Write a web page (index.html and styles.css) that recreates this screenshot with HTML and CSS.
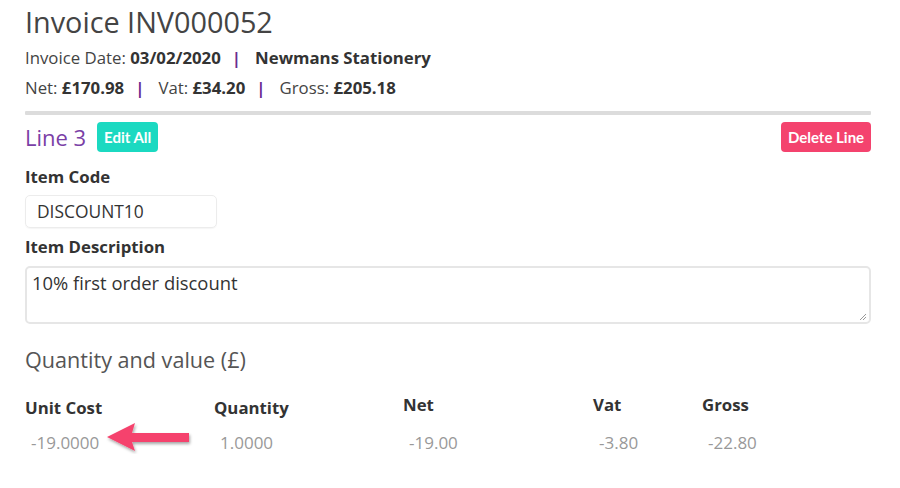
FILE: index.html
```html
<!DOCTYPE html>
<html>
<head>
<meta charset="utf-8">
<link rel="stylesheet" href="styles.css">
</head>
<body>
<div class="page">
  <h1 class="title">Invoice INV000052</h1>
  <div class="meta first">Invoice Date: <b>03/02/2020</b><span class="sep">|</span><b>Newmans Stationery</b></div>
  <div class="meta">Net: <b>£170.98</b><span class="sep">|</span>Vat: <b>£34.20</b><span class="sep">|</span>Gross: <b>£205.18</b></div>
  <div class="rule"></div>
  <div class="line-head">
    <span class="line-title">Line 3</span>
    <button class="btn btn-edit">Edit All</button>
    <span class="spacer"></span>
    <button class="btn btn-delete">Delete Line</button>
  </div>
  <label class="lbl lbl-code">Item Code</label>
  <div class="input code">DISCOUNT10</div>
  <label class="lbl lbl-desc">Item Description</label>
  <div class="textarea">10% first order discount<span class="grip"><svg width="8" height="8" viewBox="0 0 8 8"><path d="M7 1 L1 7 M7 4 L4 7" stroke="#999" stroke-width="1"/></svg></span></div>
  <h2 class="sub">Quantity and value (£)</h2>
  <div class="values">
    <div class="col c1"><div class="h">Unit Cost</div><div class="v">-19.0000</div>
      <svg class="arrow" width="92" height="36" viewBox="0 0 92 36">
        <defs><filter id="sh" x="-20%" y="-30%" width="140%" height="170%"><feDropShadow dx="1" dy="2" stdDeviation="1.5" flood-color="#000" flood-opacity="0.35"/></filter></defs>
        <path d="M2 15 L30 1 L27 11 L84 11 L84 20 L27 20 L30 29 Z" fill="#f5436d" filter="url(#sh)"/>
      </svg>
    </div>
    <div class="col c2"><div class="h">Quantity</div><div class="v">1.0000</div></div>
    <div class="col c3 up"><div class="h">Net</div><div class="v">-19.00</div></div>
    <div class="col c4 up"><div class="h">Vat</div><div class="v">-3.80</div></div>
    <div class="col c5 up"><div class="h">Gross</div><div class="v">-22.80</div></div>
  </div>
</div>
</body>
</html>
```
FILE: styles.css
```css
* { box-sizing: border-box; }
html, body { margin: 0; padding: 0; background: #fff; }
body { font-family: "Open Sans", "Noto Sans", sans-serif; color: #333; }
.page { padding: 5px 29px 0 25px; width: 900px; }
.title { font-size: 28.8px; font-weight: 400; color: #444; margin: 0; line-height: 34px; }
.meta { font-size: 16.8px; color: #444; line-height: 30px; }
.meta.first { margin-top: 4px; }
.meta b { color: #333; font-weight: 700; }
.sep { color: #6a2c91; font-weight: 700; margin: 0 14px 0 11px; }
.rule { height: 4px; background: #dcdcdc; margin: 8px 0 7px 0; border-radius: 1px; }
.line-head { display: flex; align-items: center; height: 30px; }
.line-title { font-size: 22px; color: #7a40a6; margin-right: 11px; line-height: 30px; }
.spacer { flex: 1; }
.btn { border: 0; border-radius: 4px; color: #fff; font-family: "Lato", "Open Sans", sans-serif; font-size: 15px; height: 30px; padding: 0; font-weight: 700; }
.btn-edit { background: #1bd9c1; width: 61px; }
.btn-delete { background: #f4436e; width: 90px; }
.lbl { display: block; font-size: 16.8px; font-weight: 700; color: #333; line-height: 22px; }
.lbl-code { margin-top: 14px; }
.lbl-desc { margin-top: 8px; }
.input { width: 192px; height: 33px; border: 1px solid #ececec; border-radius: 5px; margin-top: 7px; padding: 0 11px; font-size: 17.4px; line-height: 31px; color: #333; box-shadow: 0 1px 1px rgba(0,0,0,0.04); }
.textarea { position: relative; height: 58px; border: 2px solid #e6e6e6; border-radius: 5px; margin-top: 8px; padding: 3px 5px; font-size: 18.4px; line-height: 24px; color: #333; }
.grip { position: absolute; right: 2px; bottom: 1px; line-height: 0; }
.sub { font-size: 21.6px; font-weight: 400; color: #555; margin: 23px 0 0 0; line-height: 26px; }
.values { display: grid; grid-template-columns: 189px 189px 190px 109px 1fr; margin-top: 24px; }
.col { position: relative; }
.col .h { font-size: 16.8px; font-weight: 700; color: #333; line-height: 22px; }
.col .v { font-size: 17px; color: #999; line-height: 22px; margin-top: 13px; padding-left: 6px; }
.col.up { margin-top: -3px; }
.col.up .v { margin-top: 16px; }
.arrow { position: absolute; left: 80px; top: 25px; }
```
